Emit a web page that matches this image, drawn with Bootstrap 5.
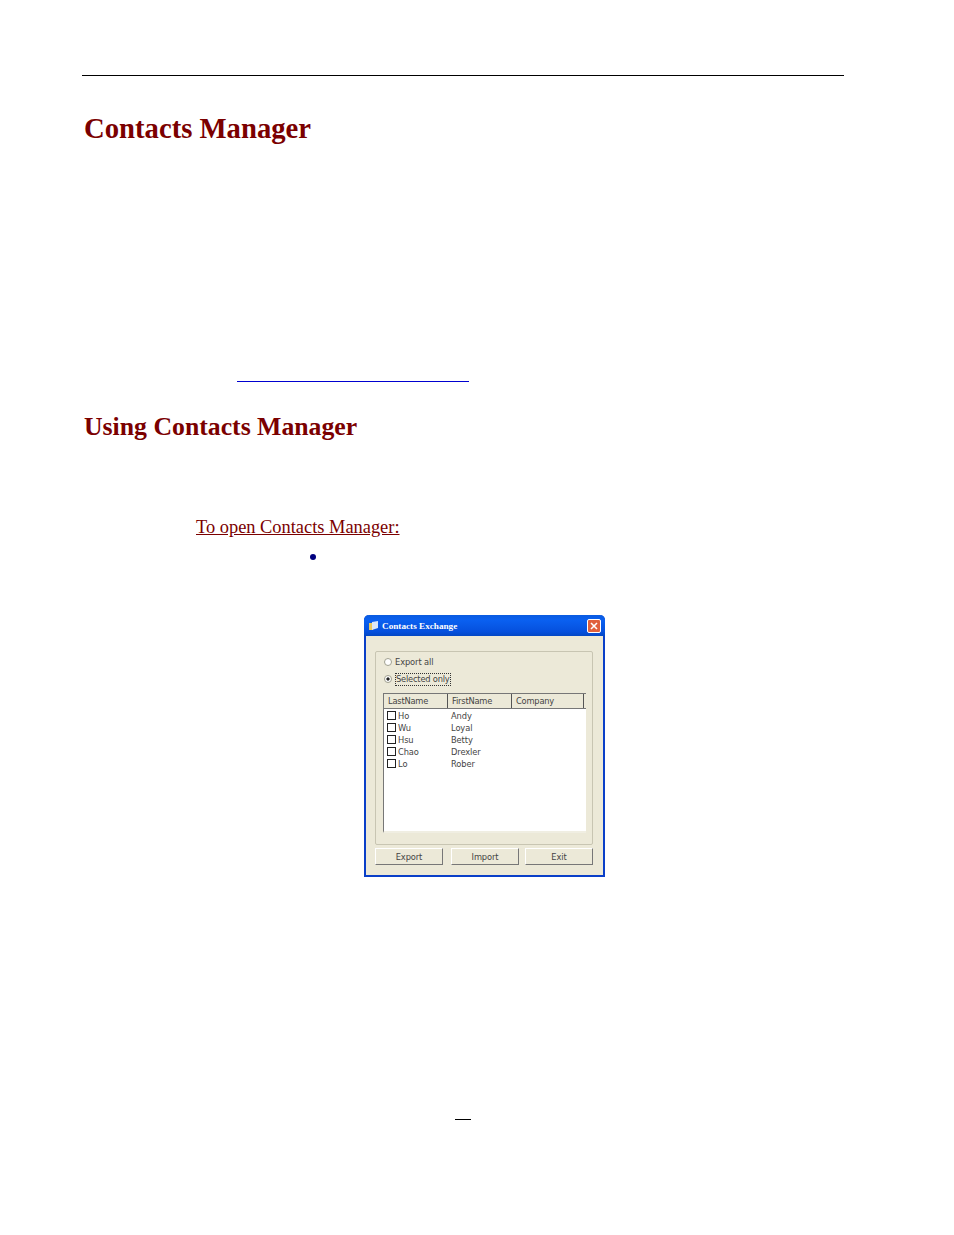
<!DOCTYPE html>
<html lang="en"><head><meta charset="utf-8"><title>Contacts Manager</title>
<link href="https://cdn.jsdelivr.net/npm/bootstrap@5.3.0/dist/css/bootstrap.min.css" rel="stylesheet">
<style>
html,body{height:100%}
body{background:#fff;font-family:"Liberation Serif",serif;color:#000;overflow:hidden}
.sheet{height:1235px;padding:75px 110px 0 82px}
.top-rule{height:1px;background:#000;opacity:1;margin:0;border:0}
.head-one{font:bold 28.7px/36px "Liberation Serif",serif;color:#7b0000;margin:34px 0 0 2px}
.blue-rule{width:232px;height:1px;background:#0000d0;margin:235px 0 0 155px}
.head-two{font:bold 25.75px/32px "Liberation Serif",serif;color:#7b0000;margin:29px 0 0 2px}
.step-title{font-size:18.4px;line-height:22px;color:#7b0000;text-decoration:underline;margin:73px 0 0 114px}
.dot{width:6px;height:6px;border-radius:50%;background:#00007f;margin:16px 0 0 228px}
.dlg{width:241px;height:262px;margin:55px 0 0 282px;background:#ece9d8;border:2px solid #0a3fc8;border-top:0;border-radius:5px 5px 0 0;font:8.3px/12px "DejaVu Sans",sans-serif;color:#444;letter-spacing:-.1px}
.dlg-bar{height:21px;margin:0 -2px;border-radius:5px 5px 0 0;background:linear-gradient(#0a5be0,#0a60f0 25%,#0550dd 80%,#0347c4);color:#fff;font-weight:bold;font-family:"Liberation Serif",serif;font-size:9.2px;letter-spacing:0;padding:0 4px 0 5px}
.close-x{width:14px;height:14px;border:1px solid #fff;border-radius:2px;background:#e0603c}
.dlg-body{padding:15px 10px 0 9px}
.grp{height:194px;border:1px solid #c8c5b2;border-radius:2px;padding:2px 7px 0 7px}
.opt{height:16px;padding-left:1px}
.opt-two{margin-top:1px}
.rad{width:8px;height:8px;border-radius:50%;background:#fff;border:1px solid #a0a090;margin-right:3px;flex:none}
.rad-on{background:radial-gradient(#222 35%,#fff 40%)}
.sel{border:1px dotted #333;line-height:11px;letter-spacing:-.2px}
.lst{margin-top:6px;height:140px;background:#fff;border-left:1px solid #777;border-top:1px solid #777;border-bottom:2px solid #f0eee2;width:203px}
.lst-head{height:15px;background:#ece9d8;border-bottom:1px solid #777}
.hcell{width:64px;padding-left:4px;border-right:1px solid #555;line-height:15px;letter-spacing:-.2px}
.hcell-last{width:72px}
.lst-row{height:12px;padding-left:3px}
.chk{width:9px;height:9px;border:1.5px solid #222;margin:-1px 2px 0 0;flex:none}
.nm{width:53px}
.rows{padding-top:1px}
.acts{margin-top:3px}
.act{width:68px;height:17px;border:1px solid #ece9d8;border-right-color:#777;border-bottom-color:#777;border-top-color:#fff;border-left-color:#fff;text-align:center;line-height:16px}
.act-mid{margin:0 6px 0 8px}
.pg-dash{width:16px;height:1px;background:#000;margin:242px 0 0 373px}
</style></head><body>
<div class="sheet">
<hr class="top-rule">
<h1 class="head-one">Contacts Manager</h1>
<div class="blue-rule"></div>
<h2 class="head-two">Using Contacts Manager</h2>
<p class="step-title">To open Contacts Manager:</p>
<div class="dot"></div>
<div class="dlg">
 <div class="dlg-bar d-flex align-items-center"><svg class="me-1" width="9" height="10" viewBox="0 0 9 10"><path d="M0 2h4v7H0z" fill="#e8c860"/><path d="M3 1l6-1v7l-6 2z" fill="#dce8f8"/></svg><span class="flex-grow-1">Contacts Exchange</span>
  <svg class="close-x" viewBox="0 0 14 14"><path d="M3.5 3.5l7 7M10.5 3.5l-7 7" stroke="#fff" stroke-width="1.8"/></svg></div>
 <div class="dlg-body">
  <div class="grp">
   <div class="opt d-flex align-items-center"><span class="rad"></span>Export all</div>
   <div class="opt opt-two d-flex align-items-center"><span class="rad rad-on"></span><span class="sel">Selected only</span></div>
   <div class="lst">
    <div class="lst-head d-flex"><div class="hcell">LastName</div><div class="hcell">FirstName</div><div class="hcell hcell-last">Company</div></div>
    <div class="rows">
    <div class="lst-row d-flex align-items-center"><span class="chk"></span><span class="nm">Ho</span><span>Andy</span></div>
    <div class="lst-row d-flex align-items-center"><span class="chk"></span><span class="nm">Wu</span><span>Loyal</span></div>
    <div class="lst-row d-flex align-items-center"><span class="chk"></span><span class="nm">Hsu</span><span>Betty</span></div>
    <div class="lst-row d-flex align-items-center"><span class="chk"></span><span class="nm">Chao</span><span>Drexler</span></div>
    <div class="lst-row d-flex align-items-center"><span class="chk"></span><span class="nm">Lo</span><span>Rober</span></div>
    </div>
   </div>
  </div>
  <div class="acts d-flex"><div class="act">Export</div><div class="act act-mid">Import</div><div class="act">Exit</div></div>
 </div>
</div>
<div class="pg-dash"></div>
</div>
<script src="https://cdn.jsdelivr.net/npm/bootstrap@5.3.0/dist/js/bootstrap.bundle.min.js"></script>
</body></html>
